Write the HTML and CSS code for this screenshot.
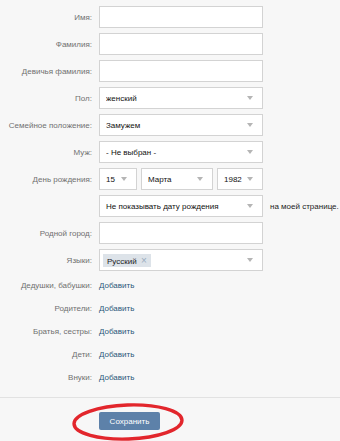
FILE: index.html
```html
<!DOCTYPE html>
<html lang="ru">
<head>
<meta charset="utf-8">
<title>Редактирование профиля</title>
<link rel="stylesheet" href="styles.css">
</head>
<body>
<div class="page">
  <div class="form">
    <div class="row"><div class="label">Имя:</div><div class="field input"></div></div>
    <div class="row"><div class="label">Фамилия:</div><div class="field input"></div></div>
    <div class="row"><div class="label">Девичья фамилия:</div><div class="field input"></div></div>
    <div class="row"><div class="label">Пол:</div><div class="field select"><span>женский</span><i class="arrow"></i></div></div>
    <div class="row"><div class="label">Семейное положение:</div><div class="field select"><span>Замужем</span><i class="arrow"></i></div></div>
    <div class="row"><div class="label">Муж:</div><div class="field select"><span>- Не выбран -</span><i class="arrow"></i></div></div>
    <div class="row"><div class="label">День рождения:</div>
      <div class="bday">
        <div class="select day"><span>15</span><i class="arrow"></i></div>
        <div class="select month"><span>Марта</span><i class="arrow"></i></div>
        <div class="select year"><span>1982</span><i class="arrow"></i></div>
      </div>
    </div>
    <div class="row"><div class="label"></div><div class="field select"><span>Не показывать дату рождения</span><i class="arrow"></i></div><div class="note">на моей странице.</div></div>
    <div class="row"><div class="label">Родной город:</div><div class="field input"></div></div>
    <div class="row"><div class="label">Языки:</div><div class="field select tokens"><span class="token">Русский <b>×</b></span><i class="arrow"></i></div></div>
  </div>
  <div class="links">
    <div class="lrow"><div class="label">Дедушки, бабушки:</div><a class="add">Добавить</a></div>
    <div class="lrow"><div class="label">Родители:</div><a class="add">Добавить</a></div>
    <div class="lrow"><div class="label">Братья, сестры:</div><a class="add">Добавить</a></div>
    <div class="lrow"><div class="label">Дети:</div><a class="add">Добавить</a></div>
    <div class="lrow"><div class="label">Внуки:</div><a class="add">Добавить</a></div>
  </div>
  <div class="footer">
    <div class="btnwrap">
      <button class="save">Сохранить</button>
      <svg class="circle" width="120" height="44" viewBox="0 0 120 44"><ellipse cx="60" cy="22" rx="54" ry="17" transform="rotate(-2 60 22)" fill="none" stroke="#e2262c" stroke-width="3.4"/></svg>
    </div>
  </div>
</div>
</body>
</html>
```
FILE: styles.css
```css
html, body {
  margin: 0;
  padding: 0;
  background: #f7f7f7;
}
body {
  font-family: "Liberation Sans", Arial, sans-serif;
  font-size: 8px;
  color: #111;
}
.page {
  width: 340px;
  height: 441px;
  overflow: hidden;
  position: relative;
}
.form {
  padding-top: 6px;
  display: flex;
  flex-direction: column;
  gap: 5px;
}
.row {
  display: flex;
  align-items: center;
  height: 22px;
}
.label {
  width: 92px;
  flex: none;
  text-align: right;
  color: #707070;
  margin-right: 7px;
  white-space: nowrap;
}
.field {
  width: 164px;
  height: 22px;
  box-sizing: border-box;
}
.input, .select {
  background: #fff;
  border: 1px solid #d3d3d3;
  box-sizing: border-box;
}
.select {
  display: flex;
  align-items: center;
  padding: 0 9px 0 6px;
  height: 22px;
}
.select span {
  flex: 1;
  white-space: nowrap;
  overflow: hidden;
}
.arrow {
  width: 0;
  height: 0;
  border-left: 3.5px solid transparent;
  border-right: 3.5px solid transparent;
  border-top: 4px solid #b5b5b5;
  flex: none;
}
.bday {
  display: flex;
  gap: 4px;
  width: 164px;
}
.day { width: 38px; }
.month { width: 72px; }
.year { width: 46px; }
.note {
  margin-left: 7px;
  color: #222;
  white-space: nowrap;
}
.tokens {
  padding-left: 3px;
}
.tokens span.token {
  flex: none;
  background: #dde3e9;
  padding: 0 4px 0 4px;
  height: 13px;
  line-height: 13px;
  color: #222;
}
.token b {
  font-weight: normal;
  font-size: 10px;
  color: #9aacbe;
  margin-left: 2px;
}
.tokens .arrow { margin-left: auto; }
.links {
  margin-top: 3px;
}
.lrow {
  display: flex;
  height: 23px;
  align-items: center;
}
.add {
  color: #2b587a;
  cursor: pointer;
}
.footer {
  margin-top: 8px;
  border-top: 1px solid #e2e2e2;
  padding-top: 14px;
}
.btnwrap {
  position: relative;
  margin-left: 99px;
  width: 61px;
}
.save {
  display: block;
  width: 61px;
  height: 18px;
  padding: 0;
  border: none;
  border-radius: 2px;
  background: #5d81a9;
  color: #fff;
  font-family: "Liberation Sans", Arial, sans-serif;
  font-size: 8px;
}
.circle {
  position: absolute;
  left: -31px;
  top: -12px;
  pointer-events: none;
}
```
